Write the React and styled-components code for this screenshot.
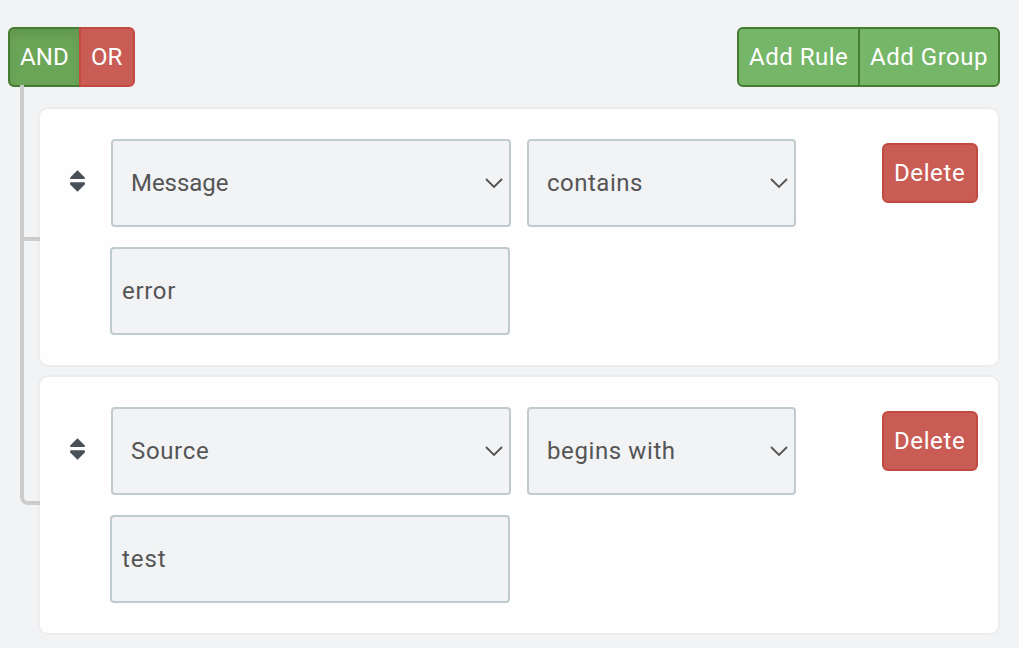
import React from "react";
import styled, { createGlobalStyle, css } from "styled-components";

const GlobalStyle = createGlobalStyle`
  *, *::before, *::after { box-sizing: border-box; }
  body {
    margin: 0;
    background: #f2f3f5;
    font-family: Roboto, "Liberation Sans", sans-serif;
    font-size: 24px;
    line-height: 36px;
    color: #555;
  }
`;

const Builder = styled.main`
  width: 1019px;
  height: 648px;
  padding: 27px 19px 0 8px;
  overflow: hidden;
`;

const Header = styled.header`
  display: flex;
  justify-content: space-between;
`;

const ButtonGroup = styled.div`
  display: flex;
`;

const tones = {
  success: css`
    background: #76b668;
    border-color: #467c31;
  `,
  active: css`
    background: #6ba557;
    border-color: #467c31;
    box-shadow: inset 0 6px 10px rgba(0, 0, 0, 0.09);
  `,
  danger: css`
    background: #c95c54;
    border-color: #c24a41;
  `,
};

const Button = styled.button`
  width: ${(p) => p.$width}px;
  height: 60px;
  padding: 0 0 0 10px;
  border: 2px solid;
  border-radius: 6px;
  color: #fff;
  font: inherit;
  text-align: left;
  white-space: nowrap;
  letter-spacing: ${(p) => p.$track || 0}px;
  ${(p) => tones[p.$tone]}

  ${ButtonGroup} > &:first-child {
    border-top-right-radius: 0;
    border-bottom-right-radius: 0;
  }
  ${ButtonGroup} > &:last-child {
    margin-left: -2px;
    border-top-left-radius: 0;
    border-bottom-left-radius: 0;
  }
`;

const RuleList = styled.div`
  display: flex;
  flex-direction: column;
  gap: 8px;
  margin-top: 20px;
  padding-left: 30px;
`;

const Rule = styled.section`
  position: relative;
  display: flex;
  align-items: flex-start;
  height: 260px;
  padding: 30px 20px 0 30px;
  background: #fefefe;
  border: 2px solid #ededee;
  border-radius: 10px;

  &::before,
  &::after {
    content: "";
    position: absolute;
    left: -20px;
    width: 20px;
    border: 0 solid #ccc;
    border-left-width: 4px;
  }
  &::before {
    top: ${(p) => (p.$first ? -24 : -10)}px;
    height: ${(p) => (p.$first ? 156 : 138)}px;
    border-bottom-width: 4px;
    border-bottom-left-radius: ${(p) => (p.$last ? 8 : 0)}px;
  }
  &::after {
    display: ${(p) => (p.$last ? "none" : "block")};
    top: 132px;
    height: 134px;
  }
`;

const Handle = styled.svg`
  flex: none;
  width: 15px;
  height: 22px;
  margin: 31px 25px 0 0;
  fill: #495057;
`;

const Fields = styled.div`
  flex: 1;
  display: flex;
  flex-direction: column;
  gap: 20px;
`;

const Selects = styled.div`
  display: flex;
  gap: 16px;
  padding-left: 1px;
`;

const Field = styled.div`
  display: flex;
  align-items: center;
  justify-content: space-between;
  width: ${(p) => p.$width}px;
  height: 88px;
  padding: 0 6px 0 ${(p) => p.$inset}px;
  background: #f2f3f5;
  border: 2px solid #bfcbcf;
  border-radius: 4px;
  letter-spacing: ${(p) => p.$track || 0}px;
`;

const Chevron = styled.svg`
  width: 18px;
  height: 12px;
  fill: none;
  stroke: #555;
  stroke-width: 1.9;
`;

const Actions = styled.div`
  padding-top: 4px;
`;

function Select({ children, ...rest }) {
  return (
    <Field $inset={18} {...rest}>
      <span>{children}</span>
      <Chevron viewBox="0 0 18 12">
        <path d="M1 2 9 10 17 2" />
      </Chevron>
    </Field>
  );
}

const rules = [
  { field: ["Message", -0.05], operator: ["contains", 0.5], value: ["error", 0.7] },
  { field: ["Source", 0.65], operator: ["begins with", 0.6], value: ["test", 0.95] },
];

export default function App() {
  return (
    <>
      <GlobalStyle />
      <Builder>
        <Header>
          <ButtonGroup>
            <Button $tone="active" $width={73} $track={0.15}>AND</Button>
            <Button $tone="danger" $width={56}>OR</Button>
          </ButtonGroup>
          <ButtonGroup>
            <Button $tone="success" $width={123} $track={0.5}>Add Rule</Button>
            <Button $tone="success" $width={142} $track={0.52}>Add Group</Button>
          </ButtonGroup>
        </Header>
        <RuleList>
          {rules.map((rule, i) => (
            <Rule key={rule.field[0]} $first={i === 0} $last={i === rules.length - 1}>
              <Handle viewBox="0 0 15 22">
                <path d="M7.5 0.3 14.8 7.4Q15.4 9 14 9H1Q-.4 9 .2 7.4ZM7.5 21.7 14.8 14.6Q15.4 12.2 14 12.2H1Q-.4 12.2 .2 14.6Z" />
              </Handle>
              <Fields>
                <Selects>
                  <Select $width={400} $track={rule.field[1]}>{rule.field[0]}</Select>
                  <Select $width={269} $track={rule.operator[1]}>{rule.operator[0]}</Select>
                </Selects>
                <Field $width={400} $inset={10} $track={rule.value[1]}>{rule.value[0]}</Field>
              </Fields>
              <Actions>
                <Button $tone="danger" $width={96} $track={0.6}>Delete</Button>
              </Actions>
            </Rule>
          ))}
        </RuleList>
      </Builder>
    </>
  );
}
